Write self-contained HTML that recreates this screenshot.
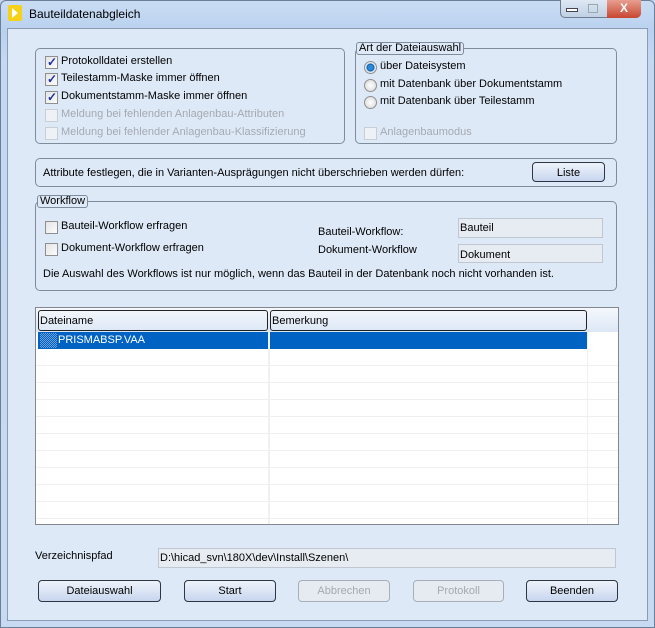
<!DOCTYPE html>
<html><head><meta charset="utf-8"><style>
*{margin:0;padding:0;box-sizing:border-box}
body{width:655px;height:628px;overflow:hidden;font-family:"Liberation Sans",sans-serif;font-size:11px;color:#000;background:#c4d6ee;position:relative}
.a{position:absolute;white-space:nowrap}
.frame{left:0;top:0;width:655px;height:628px;border:1px solid #6b7f99;border-radius:6px 6px 0 0;background:linear-gradient(#c9dcf3,#b9d1ef 30px,#c4d8f1 60px,#c8daf1)}
.client{left:7px;top:28px;width:641px;height:593px;border:1px solid #8a9bb3;background:#dee9f8}
.box{border:1px solid #7f8c9c;border-radius:5px}
.cb{width:13px;height:13px;border:1px solid #8e8f8f;background:linear-gradient(135deg,#e5e5e5,#fbfbfb)}
.cb.d{border-color:#c9ced4;background:#eef1f5}
.cb.c::after{content:"✓";position:absolute;left:1px;top:-2px;color:#1c2fa3;font-weight:bold;font-size:12px}
.rb{width:13px;height:13px;border-radius:50%;border:1px solid #8e8f8f;background:radial-gradient(#fff,#d5d5d5)}
.rb.s{background:radial-gradient(circle,#2a8ad8 0 2.5px,#0b5ba8 3.5px,#e8eef5 4.5px,#d0d6dd)}
.dis{color:#a4a9b0}
.lg{background:#dee9f8;border:1px solid #7f8c9c;border-radius:3px;padding:0 2px;line-height:11px}
.btn{border:1px solid #2c3645;border-radius:4px;background:linear-gradient(#eef3fb,#dbe5f5 50%,#c7d5ee);text-align:center;line-height:20px}
.btn.d{border-color:#a9afb8;color:#a4a9b0;background:#e6ebf2}
.fld{border:1px solid #c0c7d0;background:#e7ecf2;padding-left:1px;line-height:18px}
</style></head><body>
<div class="a frame"></div>
<div class="a" style="left:8px;top:5px;width:14px;height:16px;background:#f7d117;border-radius:2px"></div>
<div class="a" style="left:12px;top:8px;width:0;height:0;border-left:6px solid #fff;border-top:5px solid transparent;border-bottom:5px solid transparent"></div>
<div class="a" style="left:29px;top:7px;font-size:12px">Bauteildatenabgleich</div>
<div class="a" style="left:560px;top:0;width:81px;height:18px;border:1px solid #6d7d92;border-top:none;border-radius:0 0 5px 5px;background:linear-gradient(#dfe8f4,#c0d0e4);overflow:hidden"></div>
<div class="a" style="left:607px;top:0;width:34px;height:18px;background:linear-gradient(#e8a090,#c74631);border-radius:0 0 5px 0;color:#fff;font-weight:bold;text-align:center;line-height:16px;font-size:12px">X</div>
<div class="a" style="left:566px;top:8px;width:12px;height:4px;border:1px solid #445;background:#fff"></div>
<div class="a" style="left:588px;top:4px;width:10px;height:9px;border:1px solid #9aa"></div>
<div class="a client"></div>

<div class="a box" style="left:35px;top:48px;width:310px;height:96px"></div>
<div class="a cb c" style="left:45px;top:56px"></div><div class="a" style="left:61px;top:55px">Protokolldatei erstellen</div>
<div class="a cb c" style="left:45px;top:73px"></div><div class="a" style="left:61px;top:72px">Teilestamm-Maske immer öffnen</div>
<div class="a cb c" style="left:45px;top:91px"></div><div class="a" style="left:61px;top:90px">Dokumentstamm-Maske immer öffnen</div>
<div class="a cb d" style="left:45px;top:109px"></div><div class="a dis" style="left:61px;top:108px">Meldung bei fehlenden Anlagenbau-Attributen</div>
<div class="a cb d" style="left:45px;top:127px"></div><div class="a dis" style="left:61px;top:126px">Meldung bei fehlender Anlagenbau-Klassifizierung</div>

<div class="a box" style="left:355px;top:48px;width:262px;height:96px"></div>
<div class="a lg" style="left:356px;top:42px">Art der Dateiauswahl</div>
<div class="a rb s" style="left:364px;top:61px"></div><div class="a" style="left:380px;top:60px">über Dateisystem</div>
<div class="a rb" style="left:364px;top:79px"></div><div class="a" style="left:380px;top:78px">mit Datenbank über Dokumentstamm</div>
<div class="a rb" style="left:364px;top:96px"></div><div class="a" style="left:380px;top:95px">mit Datenbank über Teilestamm</div>
<div class="a cb d" style="left:364px;top:127px"></div><div class="a dis" style="left:380px;top:126px">Anlagenbaumodus</div>

<div class="a box" style="left:35px;top:158px;width:582px;height:29px"></div>
<div class="a" style="left:43px;top:167px">Attribute festlegen, die in Varianten-Ausprägungen nicht überschrieben werden dürfen:</div>
<div class="a btn" style="left:532px;top:162px;width:73px;height:20px">Liste</div>

<div class="a box" style="left:35px;top:201px;width:582px;height:90px"></div>
<div class="a lg" style="left:37px;top:195px">Workflow</div>
<div class="a cb" style="left:45px;top:221px"></div><div class="a" style="left:61px;top:220px">Bauteil-Workflow erfragen</div>
<div class="a cb" style="left:45px;top:243px"></div><div class="a" style="left:61px;top:242px">Dokument-Workflow erfragen</div>
<div class="a" style="left:318px;top:226px">Bauteil-Workflow:</div>
<div class="a" style="left:318px;top:244px">Dokument-Workflow</div>
<div class="a fld" style="left:458px;top:218px;width:145px;height:20px">Bauteil</div>
<div class="a fld" style="left:458px;top:244px;width:145px;height:19px;line-height:20px">Dokument</div>
<div class="a" style="left:43px;top:268px">Die Auswahl des Workflows ist nur möglich, wenn das Bauteil in der Datenbank noch nicht vorhanden ist.</div>

<div class="a" style="left:35px;top:307px;width:584px;height:218px;border:1px solid #828790;background:#fff"></div>
<div class="a" style="left:36px;top:308px;width:582px;height:24px;background:linear-gradient(#f5f8fd,#dce7f6)"></div>
<div class="a" style="left:38px;top:310px;width:230px;height:21px;border:1px solid #222;border-radius:3px;padding-left:1px;line-height:21px">Dateiname</div>
<div class="a" style="left:270px;top:310px;width:317px;height:21px;border:1px solid #222;border-radius:3px;padding-left:1px;line-height:21px">Bemerkung</div>
<div class="a" style="left:38px;top:332px;width:550px;height:17px;background:#0062c2"></div>
<div class="a" style="left:40px;top:333px;width:17px;height:15px;background:repeating-conic-gradient(#6e9fd6 0 25%,#0062c2 0 50%) 0 0/2px 2px"></div>
<div class="a" style="left:58px;top:334px;color:#fff">PRISMABSP.VAA</div>
<div class="a" style="left:268px;top:332px;width:2px;height:192px;background:#f0f0f0"></div>
<div class="a" style="left:587px;top:332px;width:1px;height:192px;background:#f0f0f0"></div>
<div class="a" style="left:36px;top:349px;width:582px;height:175px;background:repeating-linear-gradient(#fff 0 16px,#efefef 16px 17px)"></div>
<div class="a" style="left:268px;top:349px;width:2px;height:175px;background:#f0f0f0"></div>
<div class="a" style="left:587px;top:349px;width:1px;height:175px;background:#f0f0f0"></div>

<div class="a" style="left:35px;top:550px">Verzeichnispfad</div>
<div class="a fld" style="left:158px;top:548px;width:458px;height:20px">D:\hicad_svn\180X\dev\Install\Szenen\</div>

<div class="a btn" style="left:38px;top:580px;width:123px;height:22px">Dateiauswahl</div>
<div class="a btn" style="left:184px;top:580px;width:92px;height:22px">Start</div>
<div class="a btn d" style="left:298px;top:580px;width:92px;height:22px">Abbrechen</div>
<div class="a btn d" style="left:413px;top:580px;width:91px;height:22px">Protokoll</div>
<div class="a btn" style="left:526px;top:580px;width:92px;height:22px">Beenden</div>
</body></html>
